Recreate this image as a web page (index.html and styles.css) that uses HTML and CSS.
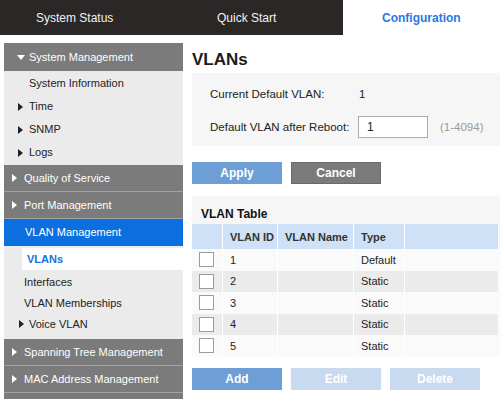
FILE: index.html
```html
<!DOCTYPE html>
<html lang="en">
<head>
  <meta charset="UTF-8">
  <title>VLANs</title>
  <link rel="stylesheet" href="styles.css">
</head>
<body>
  <div class="topbar">
    <a class="tab status">System Status</a>
    <a class="tab quick">Quick Start</a>
    <a class="tab current">Configuration</a>
  </div>
  <div class="page">
    <aside class="sidebar">
      <div class="grp open">System Management</div>
      <ul class="sub first">
        <li class="plain">System Information</li>
        <li class="arrow">Time</li>
        <li class="arrow">SNMP</li>
        <li class="arrow">Logs</li>
      </ul>
      <div class="grp">Quality of Service</div>
      <div class="grp">Port Management</div>
      <div class="grp active">VLAN Management</div>
      <ul class="sub second">
        <li class="selected">VLANs</li>
        <li class="plain">Interfaces</li>
        <li class="plain">VLAN Memberships</li>
        <li class="arrow">Voice VLAN</li>
      </ul>
      <div class="grp">Spanning Tree Management</div>
      <div class="grp">MAC Address Management</div>
      <div class="grp empty"></div>
    </aside>
    <main class="content">
      <h1>VLANs</h1>
      <div class="panel settings">
        <div class="row">
          <span class="label">Current Default VLAN:</span>
          <span class="value">1</span>
        </div>
        <div class="row">
          <span class="label">Default VLAN after Reboot:</span>
          <input class="field" type="text" value="1">
          <span class="hint">(1-4094)</span>
        </div>
      </div>
      <div class="actions">
        <button class="btn blue">Apply</button>
        <button class="btn gray">Cancel</button>
      </div>
      <div class="panel tablebox">
        <h2>VLAN Table</h2>
        <table class="vlans">
          <thead>
            <tr><th class="chk"></th><th class="id">VLAN ID</th><th class="name">VLAN Name</th><th class="type">Type</th><th></th></tr>
          </thead>
          <tbody>
            <tr><td class="chk"><span class="box"></span></td><td>1</td><td></td><td>Default</td><td></td></tr>
            <tr><td class="chk"><span class="box"></span></td><td>2</td><td></td><td>Static</td><td></td></tr>
            <tr><td class="chk"><span class="box"></span></td><td>3</td><td></td><td>Static</td><td></td></tr>
            <tr><td class="chk"><span class="box"></span></td><td>4</td><td></td><td>Static</td><td></td></tr>
            <tr><td class="chk"><span class="box"></span></td><td>5</td><td></td><td>Static</td><td></td></tr>
          </tbody>
        </table>
      </div>
      <div class="actions bottom">
        <button class="btn blue">Add</button>
        <button class="btn pale">Edit</button>
        <button class="btn pale">Delete</button>
      </div>
    </main>
  </div>
</body>
</html>
```

FILE: styles.css
```css
body { margin: 0; font-family: "Liberation Sans", Arial, sans-serif; font-size: 12px; color: #222; background: #fff; overflow: hidden; }

.topbar { display: flex; height: 35px; }
.tab { display: flex; align-items: center; box-sizing: border-box; background: #2b2726; color: #f2f2f2; font-size: 12px; }
.tab.status { width: 171px; padding-left: 36px; }
.tab.quick { width: 172px; padding-left: 46px; }
.tab.current { flex: 1; padding-left: 39px; background: #fff; color: #2a78e0; font-weight: bold; }

.page { display: flex; align-items: flex-start; }

.sidebar { width: 179px; margin: 8px 0 0 4px; background: #ebebeb; flex-shrink: 0; font-size: 11px; }
.grp { position: relative; height: 26px; line-height: 26px; padding-left: 20px; background: #7b7b7b; color: #fff; border-bottom: 1px solid #a3a3a3; }
.grp::before { content: ""; position: absolute; left: 8px; top: 9px; border-left: 5px solid #fff; border-top: 4px solid transparent; border-bottom: 4px solid transparent; }
.grp.open { height: 28px; line-height: 28px; padding-left: 25px; border-bottom: 0; }
.grp.open::before { left: 13px; top: 12px; border-top: 5px solid #fff; border-left: 4px solid transparent; border-right: 4px solid transparent; border-bottom: 0; }
.grp.active { height: 27px; line-height: 27px; padding-left: 21px; background: #0b6fe0; border-bottom: 0; }
.grp.active::before, .grp.empty::before { display: none; }

.sub { list-style: none; margin: 0; padding: 0; }
.sub li { position: relative; padding-left: 25px; }
.sub.first { padding: 1px 0 1px; }
.sub.first li { height: 23px; line-height: 23px; }
.sub.second { padding: 2px 0 4px; }
.sub.second li { height: 21px; line-height: 21px; padding-left: 20px; }
.sub li.arrow::before { content: ""; position: absolute; left: 14px; top: 8px; border-left: 5px solid #222; border-top: 4px solid transparent; border-bottom: 4px solid transparent; }
.sub.second li.arrow { padding-left: 25px; }
.sub.second li.arrow::before { top: 6px; left: 15px; }
.sub li.selected { height: 22px; line-height: 22px; margin: 0 0 2px 18px; padding-left: 5px; background: #fff; color: #1a6fdc; font-weight: bold; }

.content { flex: 1; margin-left: 9px; }
h1 { margin: 0; height: 38px; box-sizing: border-box; padding-top: 16px; line-height: 18px; font-size: 17px; font-weight: bold; color: #1b1b1b; }
.panel { background: #f6f6f6; }
.settings { padding: 10px 0 8px 18px; font-size: 11.5px; }
.row { display: flex; align-items: center; height: 22px; margin: 0 0 11px; }
.row:last-child { margin-bottom: 0; }
.label { width: 148px; }
.value { padding-left: 1px; }
.field { width: 70px; height: 22px; box-sizing: border-box; border: 1px solid #a9a9a9; padding: 0 8px; font: 12px "Liberation Sans", Arial, sans-serif; color: #222; background: #fff; }
.hint { margin-left: 12px; color: #9a9a9a; }

.actions { display: flex; gap: 9px; margin: 16px 0 12px; }
.btn { width: 90px; height: 22px; border: 0; padding: 0; font: bold 12px "Liberation Sans", Arial, sans-serif; color: #fff; }
.btn.blue { background: #6d9fd6; }
.btn.gray { background: #7b7b7b; border: 1px solid #6a6a6a; }
.btn.pale { background: #c7daf0; }
.actions.bottom { margin-top: 11px; }

.tablebox { padding-top: 10px; }
h2 { margin: 0 0 2px 9px; font-size: 12px; line-height: 16px; font-weight: bold; color: #111; }
.vlans { width: 100%; border-collapse: separate; border-spacing: 1px 0; margin-left: -1px; background: #fff; font-size: 11px; }
.vlans th { height: 25px; background: #cfe1f6; text-align: left; padding: 0 0 0 7px; font-weight: bold; color: #333; white-space: nowrap; }
.vlans td { height: 21.5px; padding: 0 0 0 7px; background: #fafafa; }
.vlans tbody tr:nth-child(even) td { background: #ebebeb; }
.vlans .chk { width: 23px; padding-left: 7px; }
.vlans .id { width: 47px; }
.vlans .name { width: 68px; }
.vlans .type { width: 43px; }
.box { display: block; width: 13px; height: 13px; border: 1px solid #9c9c9c; background: #fff; }
```
